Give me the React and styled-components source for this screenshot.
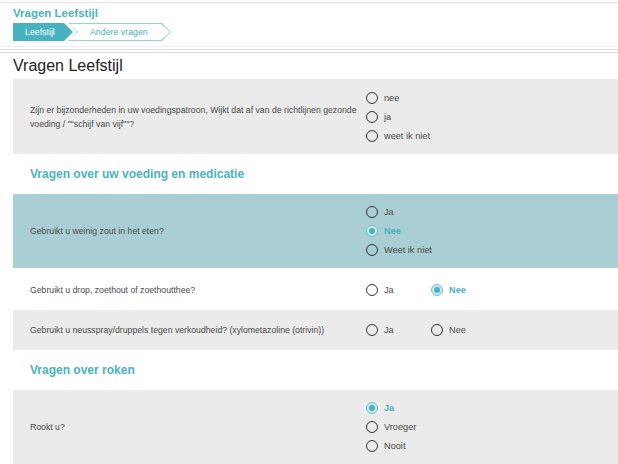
import React from "react";
import styled, { createGlobalStyle } from "styled-components";

const teal = "#49b2bf";

const GlobalStyle = createGlobalStyle`
  html, body {
    margin: 0;
    padding: 0;
    background: #ffffff;
    font-family: "Liberation Sans", Arial, sans-serif;
    color: #444;
  }
`;

const Page = styled.div`
  width: 618px;
  height: 464px;
  overflow: hidden;
  padding-top: 2px;
  box-sizing: border-box;
`;

const Header = styled.header`
  border-top: 1px solid #e2e2e2;
  border-bottom: 1px solid #f0f0f0;
  padding: 3px 13px 5px;
`;

const HeaderTitle = styled.h2`
  margin: 0 0 3px;
  font-size: 11.5px;
  font-weight: 700;
  color: ${teal};
  line-height: 14px;
`;

const Steps = styled.div`
  display: flex;
  height: 18px;
`;

const ActiveStep = styled.div`
  width: 60px;
  height: 18px;
  box-sizing: border-box;
  padding-left: 12px;
  display: flex;
  align-items: center;
  font-size: 8.8px;
  color: #fff;
  background: ${teal};
  clip-path: polygon(0 0, calc(100% - 9px) 0, 100% 50%, calc(100% - 9px) 100%, 0 100%);
`;

const OutlineStep = styled.div`
  margin-left: -5px;
  width: 103px;
  height: 18px;
  padding: 1px;
  box-sizing: border-box;
  background: #94d2da;
  clip-path: polygon(0 0, calc(100% - 9px) 0, 100% 50%, calc(100% - 9px) 100%, 0 100%, 9px 50%);
`;

const OutlineInner = styled.div`
  height: 100%;
  display: flex;
  align-items: center;
  padding-left: 21px;
  font-size: 8.8px;
  color: ${teal};
  background: #fff;
  clip-path: polygon(0 0, calc(100% - 9px) 0, 100% 50%, calc(100% - 9px) 100%, 0 100%, 9px 50%);
`;

const Content = styled.main`
  margin-top: 2px;
  border-top: 4px double #dcdcdc;
`;

const PageTitle = styled.h1`
  margin: 0 0 0 13px;
  padding: 3px 0 0;
  height: 23px;
  box-sizing: content-box;
  font-size: 16px;
  font-weight: 400;
  color: #222;
  line-height: 20px;
  border-bottom: 1px solid #ececec;
`;

const Rows = styled.div`
  margin-left: 13px;
`;

const QuestionRow = styled.div`
  display: grid;
  grid-template-columns: 336px 1fr;
  align-items: center;
  padding: ${(p) => (p.$inline ? "0 0 0 17px" : "8px 0 9px 17px")};
  min-height: ${(p) => (p.$inline ? "40px" : "0")};
  box-sizing: border-box;
  background: ${(p) =>
    p.$tone === "gray" ? "#ebebeb" : p.$tone === "blue" ? "#a9ced4" : "#fff"};
  margin-top: ${(p) => (p.$gap ? "2px" : "0")};
`;

const QuestionText = styled.div`
  font-size: 8.7px;
  line-height: 14px;
  color: #4a4a4a;
`;

const Options = styled.div`
  display: flex;
  flex-direction: ${(p) => (p.$inline ? "row" : "column")};
`;

const Option = styled.label`
  display: flex;
  align-items: center;
  gap: 6px;
  height: 19px;
  width: ${(p) => (p.$inline ? "65px" : "auto")};
  font-size: 9.2px;
  color: ${(p) => (p.$checked ? teal : "#4a4a4a")};
  font-weight: ${(p) => (p.$checked ? 700 : 400)};
`;

const Radio = styled.span`
  width: 12px;
  height: 12px;
  box-sizing: border-box;
  border-radius: 50%;
  border: 1.4px solid ${(p) => (p.$checked ? "#6cc3ce" : "#333")};
  background: ${(p) => (p.$checked ? "#cde9ed" : "transparent")};
  display: flex;
  align-items: center;
  justify-content: center;
  flex-shrink: 0;

  &::after {
    content: "";
    width: 6px;
    height: 6px;
    border-radius: 50%;
    background: ${teal};
    display: ${(p) => (p.$checked ? "block" : "none")};
  }
`;

const SectionTitle = styled.h3`
  margin: 0;
  height: 40px;
  display: flex;
  align-items: center;
  padding-left: 17px;
  font-size: 12px;
  font-weight: 700;
  color: ${teal};
`;

const BottomLine = styled.div`
  height: 1px;
  margin-top: 1px;
  background: #dadada;
`;

const Question = ({ text, options, checked, tone, inline, gap }) => (
  <QuestionRow $tone={tone} $inline={inline} $gap={gap}>
    <QuestionText>{text}</QuestionText>
    <Options $inline={inline}>
      {options.map((o) => (
        <Option key={o} $inline={inline} $checked={o === checked}>
          <Radio $checked={o === checked} />
          {o}
        </Option>
      ))}
    </Options>
  </QuestionRow>
);

export default function App() {
  return (
    <>
      <GlobalStyle />
      <Page>
        <Header>
          <HeaderTitle>Vragen Leefstijl</HeaderTitle>
          <Steps>
            <ActiveStep>Leefstijl</ActiveStep>
            <OutlineStep>
              <OutlineInner>Andere vragen</OutlineInner>
            </OutlineStep>
          </Steps>
        </Header>
        <Content>
          <PageTitle>Vragen Leefstijl</PageTitle>
          <Rows>
            <Question
              tone="gray"
              text={`Zijn er bijzonderheden in uw voedingspatroon, Wijkt dat af van de richtlijnen gezonde voeding / ""schijf van vijf""?`}
              options={["nee", "ja", "weet ik niet"]}
            />
            <SectionTitle>Vragen over uw voeding en medicatie</SectionTitle>
            <Question
              tone="blue"
              text="Gebruikt u weinig zout in het eten?"
              options={["Ja", "Nee", "Weet ik niet"]}
              checked="Nee"
            />
            <Question
              inline
              gap
              text="Gebruikt u drop, zoethout of zoethoutthee?"
              options={["Ja", "Nee"]}
              checked="Nee"
            />
            <Question
              inline
              tone="gray"
              text="Gebruikt u neusspray/druppels tegen verkoudheid? (xylometazoline (otrivin))"
              options={["Ja", "Nee"]}
            />
            <SectionTitle>Vragen over roken</SectionTitle>
            <Question
              tone="gray"
              text="Rookt u?"
              options={["Ja", "Vroeger", "Nooit"]}
              checked="Ja"
            />
          </Rows>
          <BottomLine />
        </Content>
      </Page>
    </>
  );
}
